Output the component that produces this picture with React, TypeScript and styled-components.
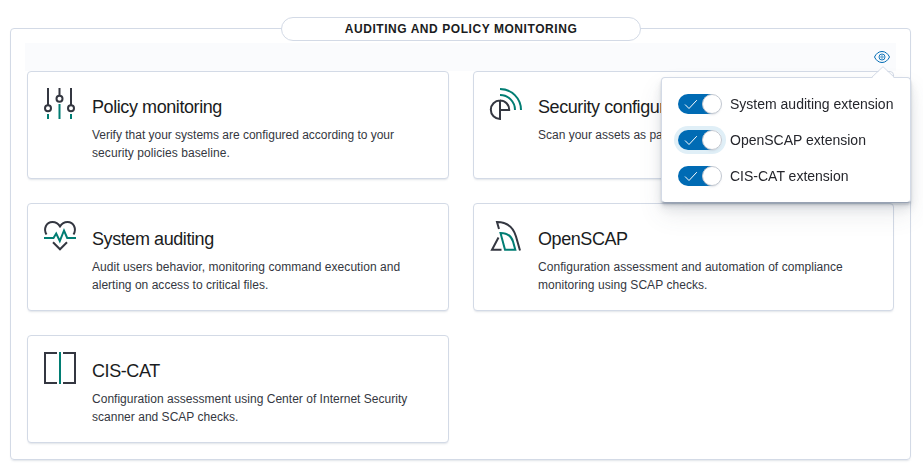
import React from 'react';
import styled, { createGlobalStyle, css } from 'styled-components';

const GlobalStyle = createGlobalStyle`
  *, *::before, *::after { box-sizing: border-box; }
  body {
    margin: 0;
    background: #fff;
    color: #343741;
    font-family: 'Liberation Sans', Arial, sans-serif;
  }
  h2, h3, p { margin: 0; font-weight: 400; }
`;

const Page = styled.main`
  padding: 17px 12px 0 10px;
  height: 471px;
  overflow: hidden;
`;

const Panel = styled.section`
  display: flex;
  flex-direction: column;
  align-items: center;
  margin-top: 11px;
  height: 432px;
  border: 1px solid #d3dae6;
  border-radius: 4px;
  box-shadow: 0 2px 2px -1px rgba(152, 162, 179, 0.3);
`;

const PanelTitle = styled.h2`
  flex: none;
  width: 360px;
  height: 24px;
  margin-top: -12px;
  border: 1px solid #d3dae6;
  border-radius: 12px;
  background: #fff;
  color: #1a1c21;
  font-size: 12px;
  font-weight: 700;
  line-height: 22px;
  letter-spacing: 0.56px;
  text-indent: 1px;
  text-align: center;
  text-transform: uppercase;
`;

const Toolbar = styled.div`
  display: flex;
  flex: none;
  justify-content: flex-end;
  align-self: stretch;
  height: 28px;
  margin: 2px 14px 0;
  padding: 6px 6px 0 0;
  background: #fafbfd;
`;

const MenuAnchor = styled.div`
  position: relative;
  width: 16px;
  height: 16px;
  color: #006bb4;
  svg { display: block; }
`;

const Grid = styled.div`
  display: grid;
  grid-template-columns: 422px 421px;
  grid-auto-rows: 108px;
  gap: 24px;
  align-self: stretch;
  margin: 0 16px;
`;

const Card = styled.article`
  display: flex;
  gap: 16px;
  padding: 16px;
  border: 1px solid #d3dae6;
  border-radius: 4px;
  background: #fff;
  box-shadow: 0 2px 2px -1px rgba(152, 162, 179, 0.3);
`;

const CardIcon = styled.svg`
  flex: none;
  width: 32px;
  height: 32px;
  fill: none;
  stroke: #343741;
  stroke-width: 2;
  overflow: visible;
  .accent { stroke: #017d73; }
`;

const CardBody = styled.div`
  padding-top: 7px;
`;

const CardTitle = styled.h3`
  color: #1a1c21;
  font-size: 18px;
  line-height: 24px;
  letter-spacing: -0.42px;
`;

const CardText = styled.p`
  margin-top: 7px;
  font-size: 12px;
  line-height: 18px;
`;

const TextLine = styled.span<{ $tracking: number }>`
  display: block;
  letter-spacing: ${(p) => p.$tracking}px;
  white-space: nowrap;
`;

const Popover = styled.div`
  position: absolute;
  z-index: 2;
  top: 28px;
  right: -21px;
  display: flex;
  flex-direction: column;
  gap: 16px;
  width: 250px;
  height: 126px;
  padding: 16px;
  border: 1px solid #d3dae6;
  border-bottom-color: #98a2b3;
  border-radius: 4px;
  background: #fff;
  box-shadow: 0 12px 24px 0 rgba(65, 78, 101, 0.1), 0 6px 12px 0 rgba(65, 78, 101, 0.1),
    0 4px 4px 0 rgba(65, 78, 101, 0.1), 0 2px 2px 0 rgba(65, 78, 101, 0.2);
  will-change: transform;
`;

const Arrow = styled.svg`
  position: absolute;
  top: -12px;
  right: 15px;
`;

const SwitchRow = styled.label`
  display: flex;
  align-items: center;
  gap: 8px;
  height: 20px;
  color: #25262c;
  font-size: 14px;
  line-height: 20px;
  white-space: nowrap;
`;

const Track = styled.span<{ $focused?: boolean }>`
  display: flex;
  flex: none;
  align-items: center;
  justify-content: space-between;
  width: 44px;
  height: 20px;
  padding-left: 5px;
  border-radius: 10px;
  background: linear-gradient(90deg, #006bb4 34px, #fff 34px);
  ${(p) => p.$focused && css`box-shadow: 0 0 0 4px #e0eff7;`}
`;

const Thumb = styled.span`
  width: 20px;
  height: 20px;
  border: 1px solid #c2c8d1;
  border-radius: 50%;
  background: #fff;
  box-shadow: 0 2px 2px -1px rgba(152, 162, 179, 0.3);
`;

const icons = {
  controls: (
    <>
      <path d="M4 0v17M15.5 0v7.5M27 0v17" />
      <circle cx="4" cy="20.3" r="3" />
      <circle cx="15.5" cy="10.7" r="3" />
      <circle cx="27" cy="20.3" r="3" />
      <path className="accent" d="M4 26v5M15.5 16v15M27 26v5" />
    </>
  ),
  radar: (
    <>
      <path d="M10 12.5a9.2 9.2 0 1 0 0 18.4zM10 12.5a9.2 9.2 0 0 1 9.2 9.5H10" />
      <path className="accent" d="M10 7a15 15 0 0 1 15 15M10 1a21 21 0 0 1 21 21" />
    </>
  ),
  heart: (
    <>
      <path d="M2.5 14.6C-.8 9 2 2.100 8.500 2.100c3.300 0 5.800 1.600 7.500 4.300 1.700-2.700 4.200-4.300 7.500-4.300 6.500 0 9.300 6.900 6 12.500M9 22.300l7 7 7-7" />
      <path className="accent" d="M0 18h9.500l2.700-4.500 3.600 7.500L20 10.500l3.200 7.500H32" />
    </>
  ),
  sail: (
    <>
      <path d="M9 9 7 2c11 0 16.500 6 19 14.500l4 14M8.500 17.500 2 29.800h9.500" />
      <path className="accent" d="M10.500 13c8 0 11 3.500 12.500 8.500l2.300 8.300H15z" />
    </>
  ),
  brackets: (
    <>
      <path d="M13 1H1v30h12M19 1h12v30H19" />
      <path className="accent" d="M16 0v32" />
    </>
  ),
};

interface CardData {
  icon: keyof typeof icons;
  title: string;
  lines: { text: string; tracking: number }[];
}

const cards: CardData[] = [
  {
    icon: 'controls',
    title: 'Policy monitoring',
    lines: [
      { text: 'Verify that your systems are configured according to your', tracking: -0.015 },
      { text: 'security policies baseline.', tracking: 0.07 },
    ],
  },
  {
    icon: 'radar',
    title: 'Security configuration assessment',
    lines: [{ text: 'Scan your assets as part of a configuration assessment audit.', tracking: 0 }],
  },
  {
    icon: 'heart',
    title: 'System auditing',
    lines: [
      { text: 'Audit users behavior, monitoring command execution and', tracking: 0.05 },
      { text: 'alerting on access to critical files.', tracking: 0.025 },
    ],
  },
  {
    icon: 'sail',
    title: 'OpenSCAP',
    lines: [
      { text: 'Configuration assessment and automation of compliance', tracking: 0.05 },
      { text: 'monitoring using SCAP checks.', tracking: 0.055 },
    ],
  },
  {
    icon: 'brackets',
    title: 'CIS-CAT',
    lines: [
      { text: 'Configuration assessment using Center of Internet Security', tracking: 0.02 },
      { text: 'scanner and SCAP checks.', tracking: 0.02 },
    ],
  },
];

const extensions = [
  { label: 'System auditing extension' },
  { label: 'OpenSCAP extension', focused: true },
  { label: 'CIS-CAT extension' },
];

export default function App() {
  return (
    <>
      <GlobalStyle />
      <Page>
        <Panel>
          <PanelTitle>Auditing and policy monitoring</PanelTitle>
          <Toolbar>
            <MenuAnchor>
              <svg width="16" height="16" viewBox="0 0 16 16" fill="none" stroke="currentColor">
                <path d="M.5 8C2 4.800 4.600 2.500 8 2.500S14 4.800 15.500 8C14 11.200 11.400 13.500 8 13.500S2 11.200.5 8z" />
                <circle cx="8" cy="8" r="3" strokeWidth="0.9" />
                <circle cx="8" cy="8" r="1.200" strokeWidth="0.7" />
              </svg>
              <Popover>
                <Arrow width="24" height="13" viewBox="0 0 24 13">
                  <path d="M0 13 12 1l12 12z" fill="#fff" />
                  <path d="M.5 11.500 12 .7l11.500 10.800" fill="none" stroke="#d3dae6" />
                </Arrow>
                {extensions.map((e) => (
                  <SwitchRow key={e.label}>
                    <Track $focused={e.focused}>
                      <svg width="16" height="16" viewBox="0 0 16 16" fill="none" stroke="#fff">
                        <path d="M2 8.500 6 12.500 13.800 4.200" />
                      </svg>
                      <Thumb />
                    </Track>
                    {e.label}
                  </SwitchRow>
                ))}
              </Popover>
            </MenuAnchor>
          </Toolbar>
          <Grid>
            {cards.map((c) => (
              <Card key={c.title}>
                <CardIcon viewBox="0 0 32 32">{icons[c.icon]}</CardIcon>
                <CardBody>
                  <CardTitle>{c.title}</CardTitle>
                  <CardText>
                    {c.lines.map((l) => (
                      <TextLine key={l.text} $tracking={l.tracking}>{l.text}</TextLine>
                    ))}
                  </CardText>
                </CardBody>
              </Card>
            ))}
          </Grid>
        </Panel>
      </Page>
    </>
  );
}
